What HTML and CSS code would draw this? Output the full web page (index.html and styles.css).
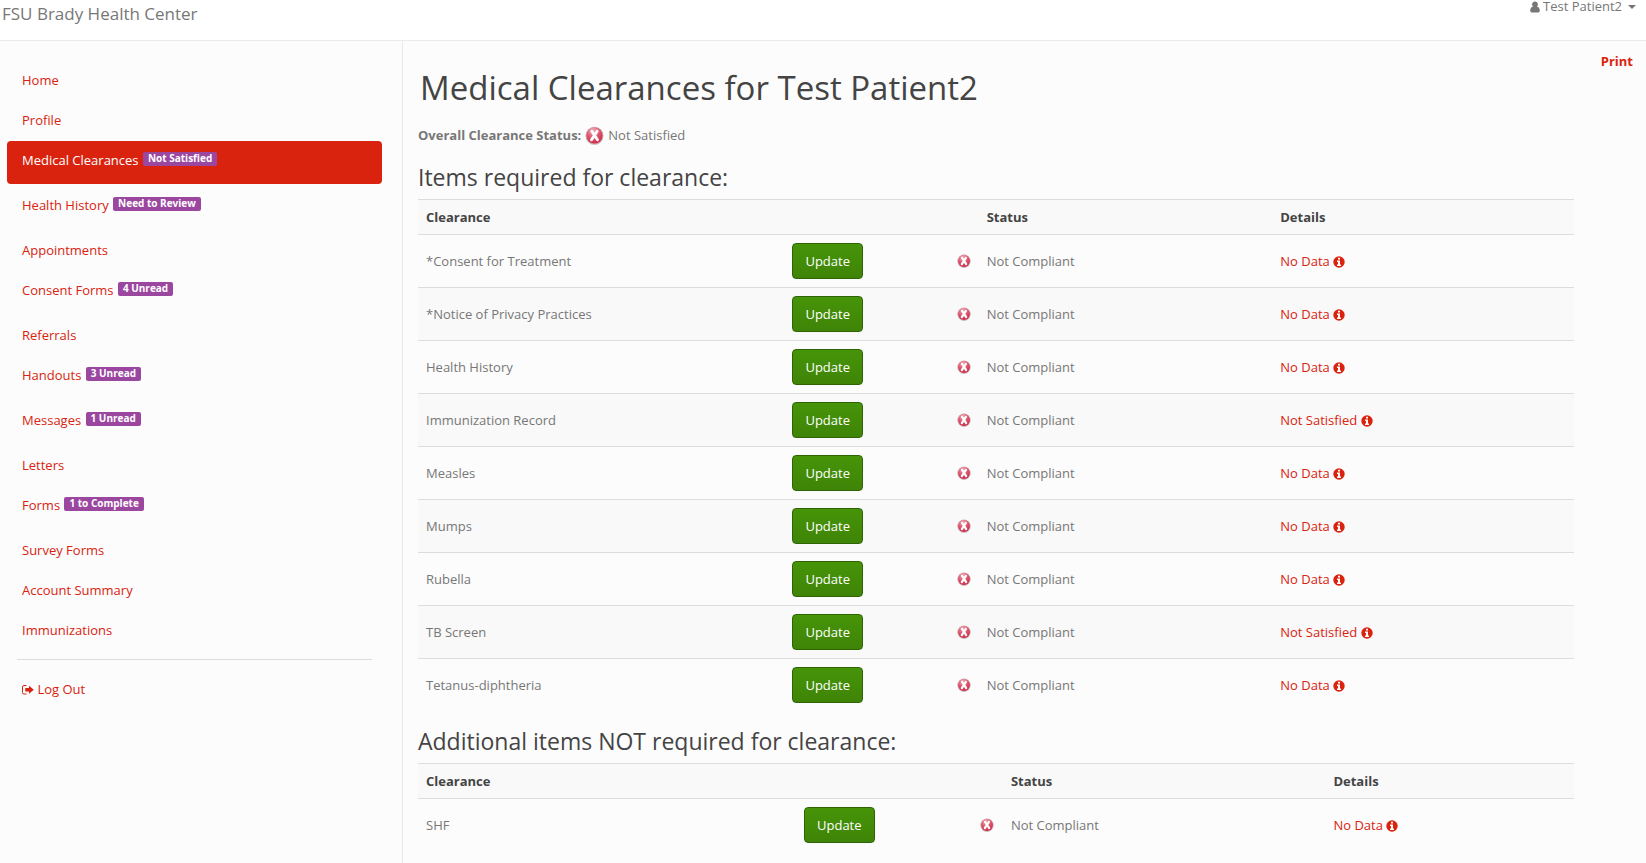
FILE: index.html
```html
<!DOCTYPE html>
<html lang="en">
<head>
	<meta charset="UTF-8" />
	<title>Medical Clearances</title>
	<link rel="stylesheet" href="styles.css">
</head>
<body>
	<!--shared icons-->
	<svg class="sprite" aria-hidden="true">
		<defs>
			<radialGradient id="ball" cx="40%" cy="20%" r="80%">
				<stop offset="0" stop-color="#f0b0ba" />
				<stop offset="0.5" stop-color="#dd5c72" />
				<stop offset="1" stop-color="#d02c4a" />
			</radialGradient>
		</defs>
		<symbol id="bad" viewBox="0 0 18 18">
			<circle cx="9" cy="9.6" r="8.4" fill="#c9c9c9" />
			<circle cx="9" cy="9" r="8.3" fill="#d2a0a8" />
			<circle cx="9" cy="9" r="7.6" fill="url(#ball)" />
			<path d="M6.500 5L11.800 13M11.500 5L6.200 13" stroke="#fff" stroke-width="2.800" stroke-linecap="round" />
		</symbol>
		<symbol id="info" viewBox="0 0 12 12">
			<path fill-rule="evenodd" d="M6 0.3a5.7 5.7 0 1 0 0 11.4a5.7 5.7 0 1 0 0-11.4zM5 1.800h2v1.700H5zM4 4.500h3v4h1v1.400H4V8.500h1V6H4z" />
		</symbol>
	</svg>

	<header class="navbar">
		<span class="brand">FSU Brady Health Center</span>
		<button class="user" type="button">
			<svg width="10" height="12" viewBox="0 0 10 12"><path d="M5 0.5a2.8 2.8 0 0 1 2 4.900c1.800.5 2.800 1.900 2.800 4.200 0 1.200-.6 1.900-1.700 1.900H1.900C.8 11.500.2 10.800.2 9.600.2 7.300 1.200 5.900 3 5.400a2.800 2.800 0 0 1 2-4.900z" /></svg>
			Test Patient2
			<span class="caret"></span>
		</button>
	</header>

	<div class="page">
		<nav class="sidebar">
			<ul class="nav">
				<li><a href="#">Home</a></li>
				<li><a href="#">Profile</a></li>
				<li class="tall active"><a href="#">Medical Clearances <span class="badge">Not Satisfied</span></a></li>
				<li class="tall"><a href="#">Health History <span class="badge">Need to Review</span></a></li>
				<li><a href="#">Appointments</a></li>
				<li class="tall"><a href="#">Consent Forms <span class="badge">4 Unread</span></a></li>
				<li><a href="#">Referrals</a></li>
				<li class="tall"><a href="#">Handouts <span class="badge">3 Unread</span></a></li>
				<li class="tall"><a href="#">Messages <span class="badge">1 Unread</span></a></li>
				<li><a href="#">Letters</a></li>
				<li class="tall"><a href="#">Forms <span class="badge">1 to Complete</span></a></li>
				<li><a href="#">Survey Forms</a></li>
				<li><a href="#">Account Summary</a></li>
				<li><a href="#">Immunizations</a></li>
				<li class="divider"></li>
				<li><a href="#"><svg width="12" height="10" viewBox="0 0 12 10"><path d="M4.500.5H2A1.500 1.500 0 0 0 .5 2v5.500A1.500 1.500 0 0 0 2 9h2.500" fill="none" stroke="#d9230f" /><path d="M7 .8L11.800 4.800 7 8.800V6.500H3.300V3H7z" /></svg> Log Out</a></li>
			</ul>
		</nav>

		<main class="content">
			<a class="print" href="#">Print</a>
			<h1>Medical Clearances for Test Patient2</h1>
			<p class="overall"><b>Overall Clearance Status:</b> <svg class="big"><use href="#bad" /></svg> Not Satisfied</p>

			<h2>Items required for clearance:</h2>
			<table class="required">
				<colgroup><col class="c1"><col class="c2"><col class="c3"><col class="c4"><col></colgroup>
				<thead>
					<tr><th>Clearance</th><th></th><th></th><th>Status</th><th>Details</th></tr>
				</thead>
				<tbody>
					<tr>
						<td>*Consent for Treatment</td>
						<td><button class="btn" type="button">Update</button></td>
						<td><svg class="bad"><use href="#bad" /></svg></td>
						<td>Not Compliant</td>
						<td><a href="#">No Data <svg class="info"><use href="#info" /></svg></a></td>
					</tr>
					<tr>
						<td>*Notice of Privacy Practices</td>
						<td><button class="btn" type="button">Update</button></td>
						<td><svg class="bad"><use href="#bad" /></svg></td>
						<td>Not Compliant</td>
						<td><a href="#">No Data <svg class="info"><use href="#info" /></svg></a></td>
					</tr>
					<tr>
						<td>Health History</td>
						<td><button class="btn" type="button">Update</button></td>
						<td><svg class="bad"><use href="#bad" /></svg></td>
						<td>Not Compliant</td>
						<td><a href="#">No Data <svg class="info"><use href="#info" /></svg></a></td>
					</tr>
					<tr>
						<td>Immunization Record</td>
						<td><button class="btn" type="button">Update</button></td>
						<td><svg class="bad"><use href="#bad" /></svg></td>
						<td>Not Compliant</td>
						<td><a href="#">Not Satisfied <svg class="info"><use href="#info" /></svg></a></td>
					</tr>
					<tr>
						<td>Measles</td>
						<td><button class="btn" type="button">Update</button></td>
						<td><svg class="bad"><use href="#bad" /></svg></td>
						<td>Not Compliant</td>
						<td><a href="#">No Data <svg class="info"><use href="#info" /></svg></a></td>
					</tr>
					<tr>
						<td>Mumps</td>
						<td><button class="btn" type="button">Update</button></td>
						<td><svg class="bad"><use href="#bad" /></svg></td>
						<td>Not Compliant</td>
						<td><a href="#">No Data <svg class="info"><use href="#info" /></svg></a></td>
					</tr>
					<tr>
						<td>Rubella</td>
						<td><button class="btn" type="button">Update</button></td>
						<td><svg class="bad"><use href="#bad" /></svg></td>
						<td>Not Compliant</td>
						<td><a href="#">No Data <svg class="info"><use href="#info" /></svg></a></td>
					</tr>
					<tr>
						<td>TB Screen</td>
						<td><button class="btn" type="button">Update</button></td>
						<td><svg class="bad"><use href="#bad" /></svg></td>
						<td>Not Compliant</td>
						<td><a href="#">Not Satisfied <svg class="info"><use href="#info" /></svg></a></td>
					</tr>
					<tr>
						<td>Tetanus-diphtheria</td>
						<td><button class="btn" type="button">Update</button></td>
						<td><svg class="bad"><use href="#bad" /></svg></td>
						<td>Not Compliant</td>
						<td><a href="#">No Data <svg class="info"><use href="#info" /></svg></a></td>
					</tr>
				</tbody>
			</table>

			<h2>Additional items NOT required for clearance:</h2>
			<table class="additional">
				<colgroup><col class="c1"><col class="c2"><col class="c3"><col class="c4"><col></colgroup>
				<thead>
					<tr><th>Clearance</th><th></th><th></th><th>Status</th><th>Details</th></tr>
				</thead>
				<tbody>
					<tr>
						<td>SHF</td>
						<td><button class="btn" type="button">Update</button></td>
						<td><svg class="bad"><use href="#bad" /></svg></td>
						<td>Not Compliant</td>
						<td><a href="#">No Data <svg class="info"><use href="#info" /></svg></a></td>
					</tr>
				</tbody>
			</table>
		</main>
	</div>
</body>
</html>
```
FILE: styles.css
```css
* {
	box-sizing: border-box;
}
body {
	margin: 0;
	min-height: 100vh;
	display: flex;
	flex-direction: column;
	font-family: "Open Sans", sans-serif;
	font-size: 13px;
	line-height: 18px;
	color: #777;
	background: #fcfcfc;
}
a {
	color: #d9230f;
	text-decoration: none;
}
svg {
	fill: currentColor;
}
.sprite {
	position: absolute;
	width: 0;
	height: 0;
}

/*top bar*/
.navbar {
	display: flex;
	justify-content: space-between;
	align-items: flex-start;
	height: 41px;
	padding: 0 10px 0 2px;
	background: #fff;
	border-bottom: 1px solid #eaeaea;
}
.brand {
	font-size: 17px;
	line-height: 28px;
}
.user {
	display: flex;
	align-items: center;
	gap: 3px;
	padding: 0;
	border: 0;
	background: none;
	font: inherit;
	line-height: 13px;
	color: #777;
}
.caret {
	margin-left: 3px;
	border: 4px solid transparent;
	border-top-color: #777;
	border-bottom: 0;
}

/*left menu*/
.page {
	display: flex;
	flex: 1;
}
.sidebar {
	flex: none;
	width: 403px;
	padding: 20px 20px 20px 7px;
	border-right: 1px solid #eaeaea;
}
.nav {
	margin: 0;
	padding: 0;
	list-style: none;
}
.nav li {
	margin-bottom: 2px;
}
.nav a {
	display: block;
	height: 38px;
	padding: 0 15px;
	line-height: 38px;
	border-radius: 4px;
}
.nav svg {
	vertical-align: -1px;
}
.nav .tall a {
	height: 43px;
}
.nav .active a {
	color: #fff;
	background: #d9230f;
}
.nav .divider {
	height: 1px;
	margin: 10px;
	background: #ddd;
}
.badge {
	display: inline-block;
	height: 14px;
	margin-left: 1px;
	padding: 0 5px;
	font-size: 10px;
	font-weight: bold;
	line-height: 13px;
	vertical-align: 3px;
	color: #fff;
	background: #9b479f;
	border-radius: 2px;
}

/*main area*/
.content {
	flex: 1;
	padding: 11px 72px 12px 15px;
}
.print {
	display: block;
	margin-right: -59px;
	text-align: right;
	font-weight: bold;
}
h1, h2 {
	margin: 0;
	font-weight: normal;
	color: #444;
}
h1 {
	padding-left: 2px;
	font-size: 33px;
	line-height: 36px;
}
.overall {
	display: flex;
	align-items: flex-end;
	gap: 4px;
	margin: 19px 0 14px;
	line-height: 20px;
}
h2 {
	padding-bottom: 4px;
	font-size: 23px;
	line-height: 36px;
}
table {
	width: 100%;
	margin-bottom: 12px;
	table-layout: fixed;
	border-collapse: separate;
	border-spacing: 0;
}
th, td {
	padding: 8px;
	border-top: 1px solid #ddd;
	text-align: left;
}
th {
	color: #444;
}
thead tr, tbody tr:nth-child(even) {
	background: #f9f9f9;
}
.required .c1 { width: 31.7%; }
.required .c2 { width: 14.2%; }
.required .c3 { width: 2.6%; }
.required .c4 { width: 25.4%; }
.additional .c1 { width: 32.7%; }
.additional .c2 { width: 15.2%; }
.additional .c3 { width: 2.7%; }
.additional .c4 { width: 27.9%; }
.btn {
	display: block;
	height: 36px;
	padding: 0 12px;
	font: inherit;
	color: #fff;
	background: linear-gradient(#469408, #3f8407);
	border: 1px solid #2f6405;
	border-radius: 4px;
}
.big {
	width: 19px;
	height: 19px;
}
.bad {
	display: block;
	width: 14px;
	height: 14px;
}
.info {
	width: 12px;
	height: 12px;
	vertical-align: -2px;
}
```
